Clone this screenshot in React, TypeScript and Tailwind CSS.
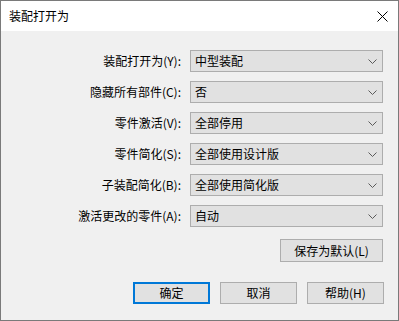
import React from "react";

// Assembly open-as dialog (Windows style)

type Row = { label: string; value: string };

const rows: Row[] = [
  { label: "装配打开为(Y):", value: "中型装配" },
  { label: "隐藏所有部件(C):", value: "否" },
  { label: "零件激活(V):", value: "全部停用" },
  { label: "零件简化(S):", value: "全部使用设计版" },
  { label: "子装配简化(B):", value: "全部使用简化版" },
  { label: "激活更改的零件(A):", value: "自动" },
];

function Chevron() {
  return (
    <svg width="9" height="5" viewBox="0 0 9 5" className="shrink-0">
      <path d="M0.5 0.5 L4.5 4.5 L8.5 0.5" fill="none" stroke="#5a5a5a" strokeWidth="1" />
    </svg>
  );
}

function Combo({ value }: { value: string }) {
  return (
    <div className="flex h-[22px] w-[193px] items-center justify-between border border-[#adadad] bg-[#e1e1e1] pl-[4px] pr-[5px]">
      <span className="leading-none">{value}</span>
      <Chevron />
    </div>
  );
}

function Button({ children, primary, className }: { children: React.ReactNode; primary?: boolean; className?: string }) {
  return (
    <div
      className={
        "flex items-center justify-center bg-[#e1e1e1] leading-none " +
        (primary ? "border-2 border-[#0078d7] " : "border border-[#adadad] ") +
        (className ?? "")
      }
    >
      {children}
    </div>
  );
}

export default function App() {
  return (
    <div
      className="flex h-[321px] w-[399px] flex-col border border-[#7a7a7a] bg-[#f0f0f0] text-[12px] text-black"
      style={{ fontFamily: '"Noto Sans CJK SC", "Noto Sans", sans-serif' }}
    >
      {/* title bar */}
      <div className="flex h-[30px] items-center justify-between bg-white pl-[8px] pr-[10px]">
        <span className="leading-none">装配打开为</span>
        <svg width="11" height="11" viewBox="0 0 11 11">
          <path d="M0.5 0.5 L10.5 10.5 M10.5 0.5 L0.5 10.5" stroke="#000" strokeWidth="1" />
        </svg>
      </div>

      {/* fields */}
      <div className="flex flex-col gap-[9px] pr-[15px] pt-[19px]">
        {rows.map((r) => (
          <div key={r.label} className="flex items-center justify-end gap-[9px]">
            <span className="leading-none">{r.label}</span>
            <Combo value={r.value} />
          </div>
        ))}
      </div>

      <div className="flex justify-end pr-[15px] pt-[12px]">
        <Button className="h-[23px] w-[103px]">保存为默认(L)</Button>
      </div>

      <div className="flex justify-end gap-[10px] pr-[14px] pt-[20px]">
        <Button primary className="h-[22px] w-[77px]">确定</Button>
        <Button className="h-[22px] w-[77px]">取消</Button>
        <Button className="h-[22px] w-[77px]">帮助(H)</Button>
      </div>
    </div>
  );
}
